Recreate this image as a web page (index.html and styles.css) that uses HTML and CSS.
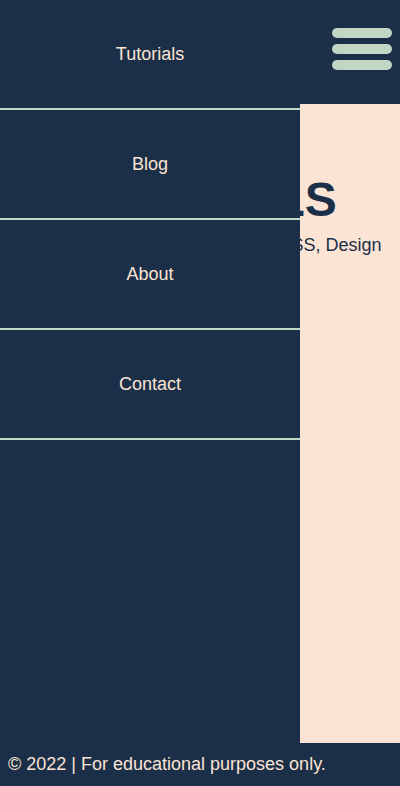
FILE: index.html
```html
<!DOCTYPE html>
<html lang="en">
<head>
    <meta charset="UTF-8">
    <meta name="viewport" content="width=device-width, initial-scale=1.0">
    <title>Tutorials</title>
    <link rel="stylesheet" href="styles.css">
</head>
<body>
    <div class="page">
        <header class="top-bar">
            <button class="menu-btn" aria-label="Menu">
                <span class="bar"></span>
                <span class="bar"></span>
                <span class="bar"></span>
            </button>
        </header>

        <main class="hero">
            <h1>TUTORIALS</h1>
            <p class="tagline">Step-by-step guides for HTML5, CSS, Design</p>
        </main>

        <!-- Slide-out menu (open) -->
        <nav class="side-menu">
            <a href="#" class="menu-item">Tutorials</a>
            <a href="#" class="menu-item">Blog</a>
            <a href="#" class="menu-item">About</a>
            <a href="#" class="menu-item">Contact</a>
        </nav>
    </div>

    <footer class="site-footer">
        <p>&copy; 2022 | For educational purposes only.</p>
    </footer>
</body>
</html>
```

FILE: styles.css
```css
body {
    font-family: Arial, "Liberation Sans", sans-serif;
    background-color: #1b2f48;
    color: #1b2f48;
    margin: 0;
    padding: 0;
    min-height: 100vh;
    display: flex;
    flex-direction: column;
}
.page {
    position: relative;
    flex: 1;
    display: flex;
    flex-direction: column;
}
.top-bar {
    background-color: #1b2f48;
    height: 104px;
    display: flex;
    justify-content: flex-end;
    align-items: flex-start;
    box-sizing: border-box;
    padding: 28px 8px 0 0;
}
.menu-btn {
    background: none;
    border: none;
    padding: 0;
    display: flex;
    flex-direction: column;
    gap: 6px;
    cursor: pointer;
}
.bar {
    display: block;
    width: 60px;
    height: 10px;
    border-radius: 5px;
    background-color: #c1d6c2;
}
.hero {
    flex: 1;
    background-color: #fbe4d4;
    text-align: center;
    padding-top: 68px;
}
.hero h1 {
    margin: 0;
    font-size: 48px;
    font-weight: bold;
}
.tagline {
    margin: 8px 0 0;
    font-size: 18px;
}
.side-menu {
    position: absolute;
    top: 0;
    left: 0;
    bottom: 0;
    width: 300px;
    background-color: #1b2f48;
    display: flex;
    flex-direction: column;
}
.menu-item {
    height: 108px;
    display: flex;
    align-items: center;
    justify-content: center;
    border-bottom: 2px solid #c1d6c2;
    color: #fbe4d4;
    text-decoration: none;
    font-size: 18px;
}
.site-footer {
    background-color: #1b2f48;
    color: #fbe4d4;
    height: 43px;
    box-sizing: border-box;
    padding: 11px 8px 0;
}
.site-footer p {
    margin: 0;
    font-size: 18px;
}
```
